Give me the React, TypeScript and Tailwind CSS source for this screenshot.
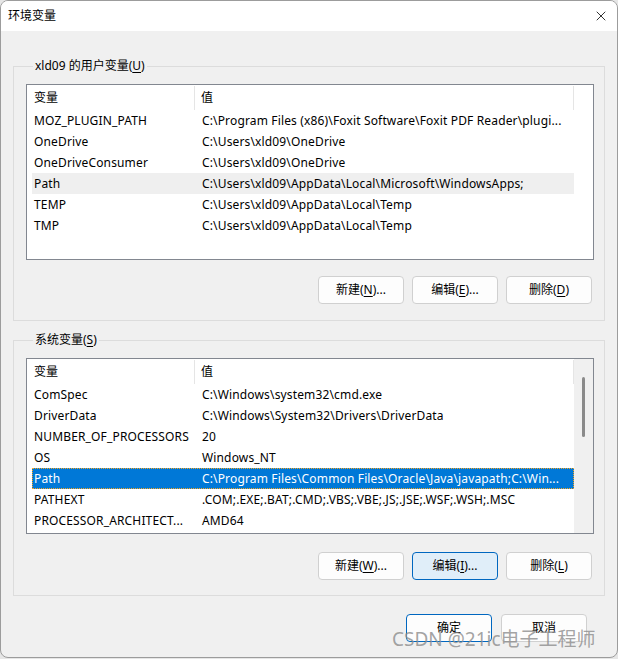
import { X } from "lucide-react";

type Row = { name: string; value: string };

const USER_VARS: Row[] = [
    { name: "MOZ_PLUGIN_PATH", value: "C:\\Program Files (x86)\\Foxit Software\\Foxit PDF Reader\\plugi..." },
    { name: "OneDrive", value: "C:\\Users\\xld09\\OneDrive" },
    { name: "OneDriveConsumer", value: "C:\\Users\\xld09\\OneDrive" },
    { name: "Path", value: "C:\\Users\\xld09\\AppData\\Local\\Microsoft\\WindowsApps;" },
    { name: "TEMP", value: "C:\\Users\\xld09\\AppData\\Local\\Temp" },
    { name: "TMP", value: "C:\\Users\\xld09\\AppData\\Local\\Temp" },
];

const SYSTEM_VARS: Row[] = [
    { name: "ComSpec", value: "C:\\Windows\\system32\\cmd.exe" },
    { name: "DriverData", value: "C:\\Windows\\System32\\Drivers\\DriverData" },
    { name: "NUMBER_OF_PROCESSORS", value: "20" },
    { name: "OS", value: "Windows_NT" },
    { name: "Path", value: "C:\\Program Files\\Common Files\\Oracle\\Java\\javapath;C:\\Win..." },
    { name: "PATHEXT", value: ".COM;.EXE;.BAT;.CMD;.VBS;.VBE;.JS;.JSE;.WSF;.WSH;.MSC" },
    { name: "PROCESSOR_ARCHITECT...", value: "AMD64" },
];

function VarList({ rows, hover, selected, scroll }: { rows: Row[]; hover?: number; selected?: number; scroll?: boolean }) {
    return (
        <div className="flex w-[568px] h-[176px] border border-[#828790] bg-white overflow-hidden">
            <div className="flex flex-col w-[547px] pl-[5px]">
                <div className="flex h-[25px] items-center">
                    <div className="w-[163px] h-[24px] pl-[2px] flex items-center border-r border-[#e5e5e5]">变量</div>
                    <div className="flex-1 h-[24px] pl-[6px] flex items-center border-r border-[#e5e5e5]">值</div>
                </div>
                {rows.map((r, i) => {
                    const sel = i === selected;
                    const hov = i === hover;
                    return (
                        <div
                            key={r.name + i}
                            className={
                                "flex h-[21px] items-center whitespace-nowrap tracking-[0.15px] " +
                                (sel ? "bg-[#0078d7] text-white outline outline-1 outline-dotted outline-[#f5a623] -outline-offset-1" : hov ? "bg-[#efefef]" : "")
                            }
                        >
                            <div className="w-[164px] pl-[2px]">{r.name}</div>
                            <div className="flex-1 pl-[6px]">{r.value}</div>
                        </div>
                    );
                })}
            </div>
            <div className={"w-[19px] flex justify-center pt-[18px] " + (scroll ? "bg-[#f0f0f0]" : "")}>
                {scroll && <div className="w-[3px] h-[60px] rounded-full bg-[#8a8a8a]" />}
            </div>
        </div>
    );
}

function Btn({ children, active, def }: { children: React.ReactNode; active?: boolean; def?: boolean }) {
    return (
        <button
            className={
                "w-[86px] h-[28px] rounded-[4px] border text-[12px] " +
                (active ? "bg-[#e0eef9] border-[#0067c0]" : def ? "bg-[#fdfdfd] border-[#0067c0]" : "bg-[#fdfdfd] border-[#d0d0d0]")
            }
        >
            {children}
        </button>
    );
}

function U({ c }: { c: string }) {
    return <span className="underline underline-offset-2">{c}</span>;
}

export default function App() {
    return (
        <div
            className="w-[618px] h-[659px] bg-[#e6e6e6] text-[12px] text-black relative"
            style={{ fontFamily: '"Noto Sans", "Noto Sans CJK SC", sans-serif' }}
        >
            <div className="w-[618px] h-[658px] border border-[#9c9c9c] rounded-[8px] overflow-hidden bg-[#f0f0f0] flex flex-col">
                <div className="h-[30px] bg-white flex items-center justify-between pl-[7px] pr-[8px] shrink-0">
                    <span>环境变量</span>
                    <X size={16} strokeWidth={1.2} />
                </div>

                <fieldset className="mx-[12px] w-[592px] min-w-0 mt-[27px] border border-[#dcdcdc] pl-[12px] pr-[10px] pb-[16px]">
                    <legend className="ml-[7px] px-[2px] leading-[16px]">
                        xld09 的用户变量(<U c="U" />)
                    </legend>
                    <div className="mt-[10px]">
                        <VarList rows={USER_VARS} hover={3} />
                    </div>
                    <div className="flex justify-end gap-[8px] mt-[16px] pr-[2px]">
                        <Btn>新建(<U c="N" />)...</Btn>
                        <Btn>编辑(<U c="E" />)...</Btn>
                        <Btn>删除(<U c="D" />)</Btn>
                    </div>
                </fieldset>

                <fieldset className="mx-[12px] w-[592px] min-w-0 mt-[11px] border border-[#dcdcdc] pl-[12px] pr-[10px] pb-[15px]">
                    <legend className="ml-[7px] px-[2px] leading-[16px]">
                        系统变量(<U c="S" />)
                    </legend>
                    <div className="mt-[10px]">
                        <VarList rows={SYSTEM_VARS} selected={4} scroll />
                    </div>
                    <div className="flex justify-end gap-[8px] mt-[18px] pr-[2px]">
                        <Btn>新建(<U c="W" />)...</Btn>
                        <Btn active>编辑(<U c="I" />)...</Btn>
                        <Btn>删除(<U c="L" />)</Btn>
                    </div>
                </fieldset>

                <div className="flex justify-end gap-[9px] mt-[18px] pr-[30px]">
                    <Btn def>确定</Btn>
                    <Btn>取消</Btn>
                </div>
            </div>

            <div className="absolute left-[392px] top-[625px] text-[19px] text-[#8c8c8c]/80 whitespace-nowrap pointer-events-none">
                CSDN @21ic电子工程师
            </div>
        </div>
    );
}
